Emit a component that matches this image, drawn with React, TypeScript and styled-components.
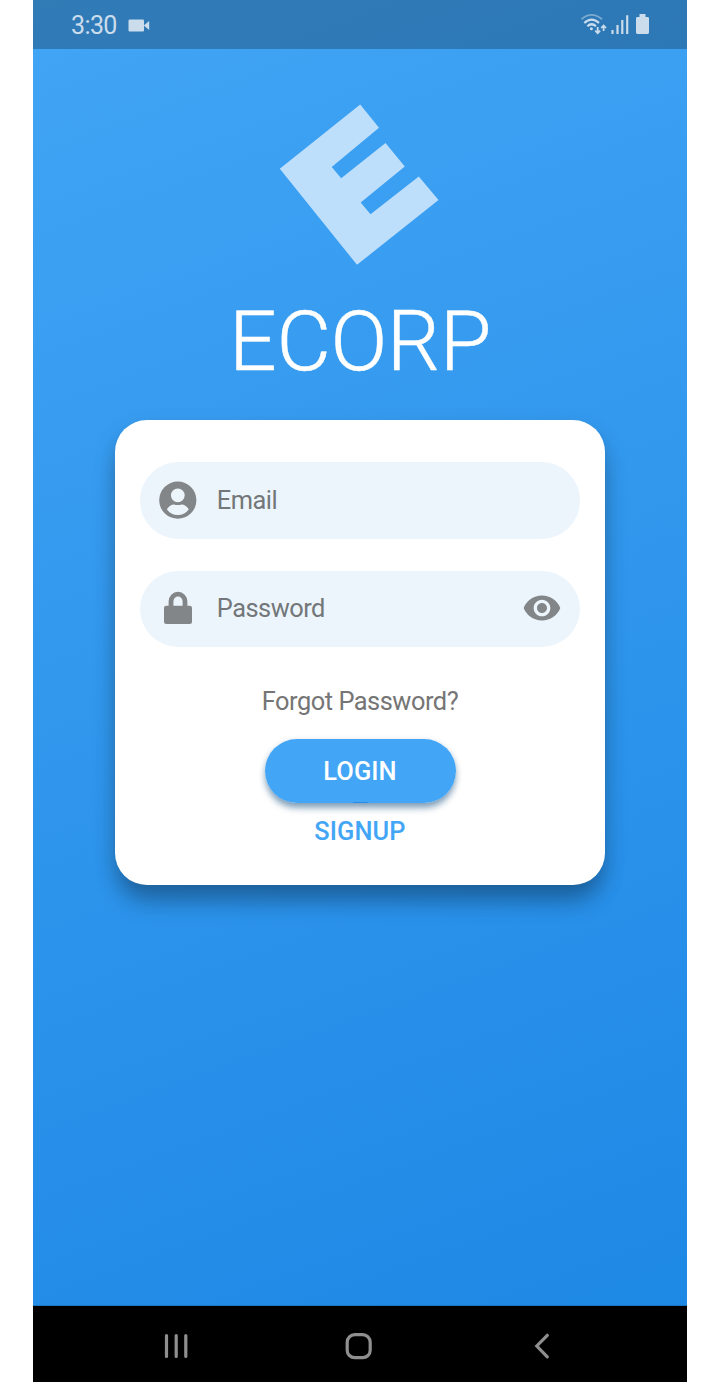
import React from "react";
import styled, { createGlobalStyle } from "styled-components";

const GlobalStyle = createGlobalStyle`
  * { box-sizing: border-box; }
  body { margin: 0; background: #fff; font-family: Roboto, "Liberation Sans", sans-serif; }
  svg { display: block; }
`;

const Phone = styled.main`
  width: 654px;
  height: 1382px;
  margin: 0 auto;
  display: flex;
  flex-direction: column;
  background: #000;
`;

const Screen = styled.div`
  height: 1306px;
  display: flex;
  flex-direction: column;
  align-items: center;
  background: linear-gradient(160deg, #42a5f5 0%, #1e88e5 100%) border-box;
  border-bottom: 1px solid rgba(0, 0, 0, 0.15);
`;

const StatusBar = styled.header`
  width: 100%;
  height: 49px;
  flex: none;
  display: flex;
  justify-content: space-between;
  padding: 0 36px 0 38px;
  background: rgba(0, 0, 0, 0.25);
  color: #cbddec;
`;

const StatusLeft = styled.div`
  display: flex;
  align-items: center;
  gap: 11px;
  padding-top: 2px;
`;

const Clock = styled.span`
  font-size: 25px;
  line-height: 29px;
  letter-spacing: -0.6px;
  width: 46px;
  white-space: nowrap;
`;

const Logo = styled.svg`
  margin-top: 51px;
  flex: none;
`;

const Title = styled.h1`
  margin: 22px 0 0;
  font-size: 84px;
  line-height: 100px;
  font-weight: 300;
  letter-spacing: -0.5px;
  -webkit-text-stroke: 0.5px #fff;
  color: #fff;
`;

const Card = styled.section`
  width: 490.5px;
  height: 464.5px;
  margin-top: 28.4px;
  padding: 42px 25.5px 0;
  display: flex;
  flex-direction: column;
  align-items: center;
  border-radius: 32px;
  background: #fff;
  box-shadow: 0 21px 24px -5px rgba(0, 0, 0, 0.23),
    0 10px 22px 0 rgba(0, 0, 0, 0.17);
`;

const Field = styled.label<{ $gap?: number }>`
  width: 100%;
  height: 76.3px;
  margin-top: ${(p) => p.$gap ?? 0}px;
  padding: 0 18px 1px;
  display: flex;
  align-items: center;
  border-radius: 38.2px;
  background: #edf5fc;
  color: #828688;
`;

const FieldText = styled.span`
  flex: 1;
  margin: 0 0 1px 18.5px;
  font-size: 25.4px;
  line-height: 30px;
  letter-spacing: -0.5px;
  color: #737779;
`;

const Forgot = styled.a`
  margin-top: 39px;
  font-size: 25.4px;
  line-height: 30px;
  letter-spacing: -0.48px;
  color: #757575;
`;

const LoginButton = styled.button`
  width: 191px;
  height: 64px;
  margin-top: 22.8px;
  padding: 0;
  border: 0;
  border-radius: 32px;
  background: radial-gradient(ellipse 9px 1.5px at 50% 100%, #258de8 75%, #42a5f5 100%);
  color: #fff;
  font: 500 25.4px/30px Roboto, sans-serif;
  letter-spacing: 0.1px;
  box-shadow: 0 6px 7px -1px rgba(13, 71, 121, 0.42),
    0 2px 6px rgba(13, 71, 121, 0.24);
`;

const SignupButton = styled.button`
  margin-top: 13px;
  padding: 0;
  border: 0;
  background: none;
  color: #42a5f5;
  font: 500 25.4px/30px Roboto, sans-serif;
  letter-spacing: 0.1px;
`;

const NavBar = styled.nav`
  height: 76px;
`;

export default function App() {
  return (
    <>
      <GlobalStyle />
      <Phone>
        <Screen>
          <StatusBar>
            <StatusLeft>
              <Clock>3:30</Clock>
              <svg width="22" height="13" viewBox="0 0 22 13" fill="currentColor">
                <rect x="0.5" y="0.5" width="15.5" height="12" rx="1.3" />
                <path d="M15.8 6.5 21.2 1.9V11.1Z" />
              </svg>
            </StatusLeft>
            <svg width="70" height="49" viewBox="581 0 70 49" fill="none" stroke="currentColor">
              <path d="M581.5 19.2Q591.5 10.6 602 19.2" strokeWidth="1.8" opacity=".5" />
              <path d="M584.3 23Q591.7 16.2 599 23M587.3 26.2Q591.7 22.3 596 26.2" strokeWidth="2.2" />
              <circle cx="591.4" cy="28.8" r="1.5" fill="currentColor" stroke="none" />
              <path d="M597.7 27v6M595.3 30.6l2.4 2.5 2.4-2.5M603.6 31v-5.4M601.2 28l2.4-2.5 2.4 2.5" strokeWidth="1.8" />
              <path d="M612.5 30v4M617.5 25v9M622.3 20v14M627.2 15.3V34" strokeWidth="2.2" />
              <path d="M639.5 17v-3h6v3h2q1.5 0 1.5 1.2V32.6q0 1.4-1.5 1.4h-10q-1.5 0-1.5-1.4V18.2q0-1.2 1.5-1.2Z" fill="currentColor" stroke="none" />
            </svg>
          </StatusBar>
          <Logo width="166" height="170" viewBox="277 100 166 170" fill="#bedffc">
            <path d="M360.2 104.5 379 127.8 331.7 167 341.2 178.2 385.5 143 404.8 166.5 360.7 202.5 370.5 214.3 418.8 176.5 438.5 200 357 264.8 279.8 168.8Z" />
          </Logo>
          <Title>ECORP</Title>
          <Card>
            <Field>
              <svg width="40" height="40" viewBox="0 0 40 40" fill="currentColor">
                <path fillRule="evenodd" d="M19.8 1.5a18.6 18.6 0 1 0 0 37.2a18.6 18.6 0 0 0 0-37.2ZM19.8 8.4a6.9 6.9 0 1 1 0 13.8a6.9 6.9 0 0 1 0-13.8ZM8.8 29.2Q12 24.6 16 24.4Q19.8 25.8 23.6 24.4Q27.6 24.6 30.8 29.2Q27 34.9 19.8 35Q12.6 34.9 8.8 29.2Z" />
              </svg>
              <FieldText>Email</FieldText>
            </Field>
            <Field $gap={32}>
              <svg width="40" height="40" viewBox="0 0 40 40" fill="none">
                <rect x="6" y="17.7" width="28" height="18.2" rx="2.2" fill="currentColor" />
                <path d="M13 19v-5.5a7 7.3 0 0 1 14 0v5.5" stroke="currentColor" strokeWidth="4.8" />
              </svg>
              <FieldText>Password</FieldText>
              <svg width="40" height="40" viewBox="0 0 24 24" fill="currentColor">
                <path d="M12 4.5C7 4.5 2.73 7.61 1 12c1.73 4.39 6 7.5 11 7.5s9.27-3.11 11-7.5c-1.73-4.39-6-7.5-11-7.5zM12 17c-2.76 0-5-2.24-5-5s2.24-5 5-5 5 2.24 5 5-2.24 5-5 5zm0-8c-1.66 0-3 1.34-3 3s1.34 3 3 3 3-1.34 3-3-1.34-3-3-3z" />
              </svg>
            </Field>
            <Forgot>Forgot Password?</Forgot>
            <LoginButton>LOGIN</LoginButton>
            <SignupButton>SIGNUP</SignupButton>
          </Card>
        </Screen>
        <NavBar>
          <svg width="654" height="76" viewBox="33 1306 654 76" fill="none" stroke="#8f8f8f" strokeWidth="3.2" strokeLinecap="round">
            <path d="M166.5 1335.5v21M176.2 1335.5v21M185.8 1335.5v21" />
            <rect x="347.2" y="1334.7" width="23" height="23" rx="7.5" />
            <path d="M547.3 1335.3 536.8 1346 547.3 1356.8" />
          </svg>
        </NavBar>
      </Phone>
    </>
  );
}
